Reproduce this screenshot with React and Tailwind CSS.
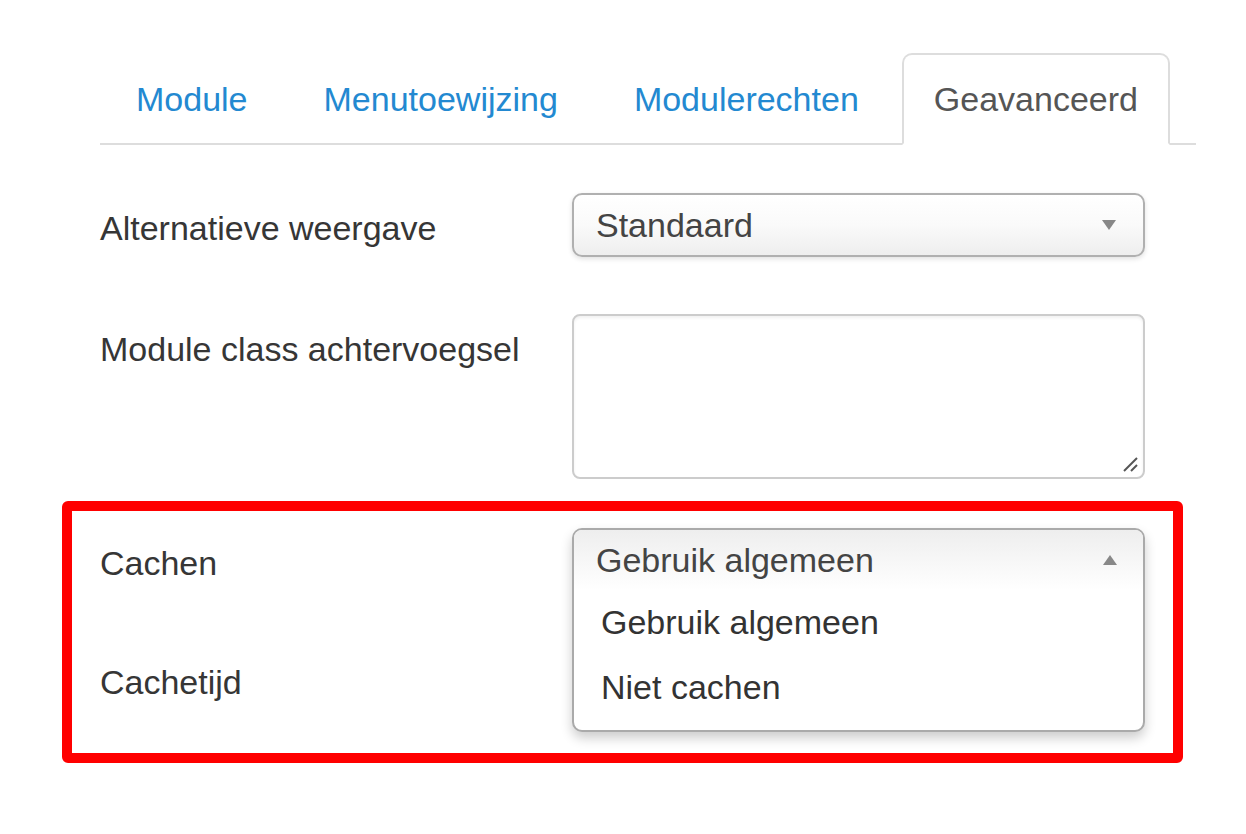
import React from "react";

const tabs = ["Module", "Menutoewijzing", "Modulerechten", "Geavanceerd"];

// Small triangle used by the chosen-style selects
const Caret = ({ up }) => (
  <svg width="14" height="10" viewBox="0 0 14 10" className="shrink-0">
    <polygon points={up ? "7,0 14,10 0,10" : "0,0 14,0 7,10"} fill="#888" />
  </svg>
);

const Label = ({ children }) => (
  <div className="w-[472px] shrink-0 pt-[15px] text-[34px] leading-[40px] text-[#363636]">
    {children}
  </div>
);

const App = () => {
  return (
    <div className="w-[1246px] h-[834px] bg-white pl-[100px] pt-[53px] font-['Liberation_Sans',Arial,sans-serif]">
      <div className="w-[1096px]">
        {/* tabs */}
        <ul className="flex gap-[4px] border-b-2 border-[#dddddd]">
          {tabs.map((t, i) => {
            const active = i === tabs.length - 1;
            return (
              <li
                key={t}
                className={
                  "h-[92px] -mb-[2px] flex items-center border-2 text-[34px] " +
                  (active
                    ? "ml-[3px] px-[30px] border-[#dddddd] border-b-white bg-white rounded-t-[10px] text-[#555555]"
                    : "px-[34px] border-transparent text-[#2389d1]")
                }
              >
                {t}
              </li>
            );
          })}
        </ul>

        {/* form */}
        <div className="mt-[48px]">
          <div className="flex mb-[57px]">
            <Label>Alternatieve weergave</Label>
            <div className="w-[573px] h-[64px] flex items-center justify-between pl-[22px] pr-[27px] border-2 border-[#b0b0b0] rounded-[10px] bg-linear-to-b from-white via-[#fafafa] to-[#eeeeee] shadow-[0_2px_5px_rgba(0,0,0,0.12)] text-[34px] text-[#444444]">
              <span>Standaard</span>
              <Caret />
            </div>
          </div>

          <div className="flex">
            <Label>Module class achtervoegsel</Label>
            <div className="relative w-[573px] h-[165px] border-2 border-[#cccccc] rounded-[8px] shadow-[inset_0_2px_3px_rgba(0,0,0,0.06)]">
              <svg
                width="18"
                height="18"
                viewBox="0 0 18 18"
                className="absolute right-[4px] bottom-[4px]"
              >
                <line x1="3" y1="16" x2="16" y2="3" stroke="#555" strokeWidth="2" />
                <line x1="10" y1="16" x2="16" y2="10" stroke="#555" strokeWidth="2" />
              </svg>
            </div>
          </div>

          {/* highlighted block */}
          <div className="mt-[22px] -ml-[38px] w-[1121px] border-[10px] border-[#ff0000] rounded-[6px] pl-[28px] pt-[17px] pb-[42px]">
            <div className="flex mb-[55px]">
              <Label>Cachen</Label>
              <div className="relative w-[573px] h-[64px] z-10">
                <div className="absolute left-0 top-0 w-full border-2 border-[#aaaaaa] rounded-[10px] bg-white shadow-[0_6px_12px_rgba(0,0,0,0.2)]">
                  <div className="h-[60px] flex items-center justify-between pl-[22px] pr-[26px] rounded-t-[8px] bg-linear-to-b from-[#eeeeee] to-white text-[34px] text-[#444444]">
                    <span>Gebruik algemeen</span>
                    <Caret up />
                  </div>
                  <ul className="pb-[10px] text-[34px] text-[#333333]">
                    <li className="h-[65px] flex items-center pl-[27px]">Gebruik algemeen</li>
                    <li className="h-[65px] flex items-center pl-[27px]">Niet cachen</li>
                  </ul>
                </div>
              </div>
            </div>

            <div className="flex">
              <Label>Cachetijd</Label>
              <div className="w-[573px] h-[64px] border-2 border-[#cccccc] rounded-[8px]" />
            </div>
          </div>
        </div>
      </div>
    </div>
  );
};

export default App;
